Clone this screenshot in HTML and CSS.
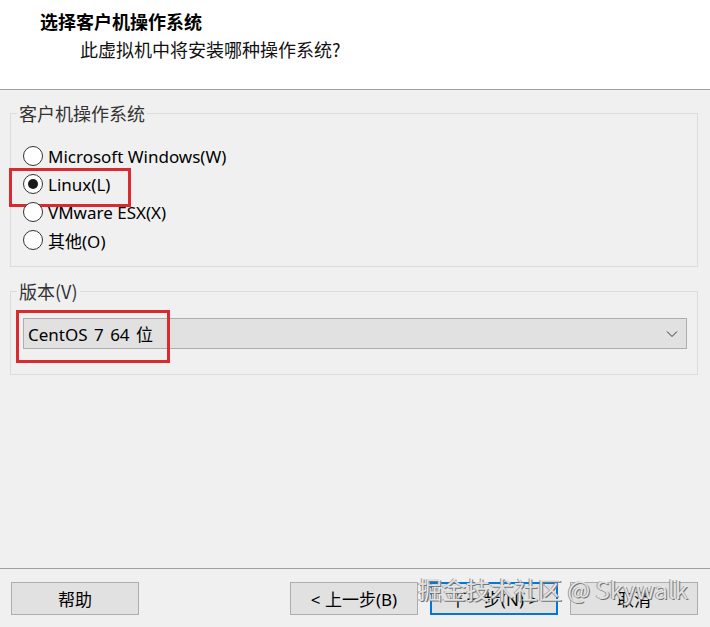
FILE: index.html
```html
<!DOCTYPE html>
<html lang="zh-CN">
<head>
<meta charset="utf-8">
<link rel="stylesheet" href="styles.css">
</head>
<body>
<div class="dialog">
  <header class="head">
    <div class="title">选择客户机操作系统</div>
    <div class="subtitle">此虚拟机中将安装哪种操作系统?</div>
  </header>
  <main class="content">
    <fieldset class="group group-os">
      <legend>客户机操作系统</legend>
      <div class="radios">
        <label class="radio"><span class="dot"></span><span>Microsoft Windows(W)</span></label>
        <label class="radio checked mark mark-linux"><span class="dot"></span><span>Linux(L)</span></label>
        <label class="radio"><span class="dot"></span><span>VMware ESX(X)</span></label>
        <label class="radio"><span class="dot"></span><span><span class="cjk">其他</span>(O)</span></label>
      </div>
    </fieldset>
    <fieldset class="group group-ver">
      <legend><span class="cjk">版本</span>(V)</legend>
      <div class="select mark mark-ver">
        <span class="select-text">CentOS 7 64 <span class="cjk">位</span></span>
        <svg class="chev" width="12" height="8" viewBox="0 0 12 8"><path d="M1 1.5 L6 6.5 L11 1.5" fill="none" stroke="#333" stroke-width="1"/></svg>
      </div>
    </fieldset>
  </main>
  <footer class="foot">
    <button class="btn">帮助</button>
    <div class="spacer"></div>
    <button class="btn">&lt; 上一步(B)</button>
    <button class="btn primary">下一步(N) &gt;</button>
    <button class="btn">取消</button>
    <div class="watermark">掘金技术社区 @ Skywalk</div>
  </footer>
</div>
</body>
</html>
```
FILE: styles.css
```css
* { box-sizing: border-box; }
html, body { margin: 0; padding: 0; }
body {
  width: 710px;
  height: 627px;
  background: #f0f0f0;
  font-family: "Noto Sans", "Noto Sans CJK SC", sans-serif;
  color: #000;
  overflow: hidden;
}
.cjk { font-family: "Noto Sans CJK SC", sans-serif; }
.dialog { display: flex; flex-direction: column; height: 627px; }
.head {
  height: 90px;
  background: #fff;
  border-bottom: 1px solid #a0a0a0;
  padding: 8px 0 0 40px;
}
.title {
  font-family: "Noto Sans CJK SC", sans-serif;
  font-weight: bold;
  font-size: 18px;
  line-height: 26px;
  color: #000;
}
.subtitle {
  font-family: "Noto Sans CJK SC", sans-serif;
  font-size: 18px;
  line-height: 26px;
  padding-left: 40px;
  margin-top: 2px;
  color: #111;
}
.content {
  flex: 1;
  padding: 12px 12px 0 10px;
  border-bottom: 1px solid #a0a0a0;
  display: flex;
  flex-direction: column;
}
.group {
  margin: 0;
  border: 1px solid #dcdcdc;
  padding: 0;
}
.group legend {
  margin-left: 6px;
  padding: 0 2px;
  font-family: "Noto Sans CJK SC", sans-serif;
  font-size: 18px;
  line-height: 22px;
  color: #333;
}
.group-os { height: 165px; }
.radios { display: flex; flex-direction: column; padding: 18px 0 0 12px; }
.radio {
  display: flex;
  align-items: center;
  gap: 5px;
  height: 28px;
  font-size: 17px;
}
.dot {
  width: 20px;
  height: 20px;
  border-radius: 50%;
  border: 1px solid #333;
  background: #fff;
  position: relative;
}
.checked .dot::after {
  content: "";
  position: absolute;
  left: 4px; top: 4px;
  width: 10px; height: 10px;
  border-radius: 50%;
  background: #1a1a1a;
}
.mark { position: relative; }
.mark::after {
  content: "";
  position: absolute;
  border: 3px solid #d92a30;
  pointer-events: none;
}
.mark-linux::after { left: -14px; top: -2px; width: 116px; height: 33px; }
.group-ver { margin-top: 13px; height: 95px; }
.select {
  margin: 16px 10px 0 12px;
  height: 31px;
  background: #e1e1e1;
  border: 1px solid #adadad;
  display: flex;
  align-items: center;
  justify-content: space-between;
  padding: 0 8px 0 4px;
  font-size: 17px;
  word-spacing: 2px;
}
.mark-ver::after { left: -8px; top: -9px; width: 148px; height: 47px; }
.chev { margin-right: 0; }
.foot {
  height: 58px;
  display: flex;
  align-items: flex-start;
  padding: 13px 12px 0 11px;
  gap: 12px;
  position: relative;
}
.spacer { flex: 1; }
.btn {
  width: 128px;
  height: 33px;
  background: #e1e1e1;
  border: 1px solid #adadad;
  font-family: "Noto Sans", "Noto Sans CJK SC", sans-serif;
  font-size: 17px;
  color: #000;
  padding: 0;
}
.btn.primary { border: 2px solid #0078d7; }
.watermark {
  position: absolute;
  left: 418px;
  top: 5px;
  font-family: "Noto Sans CJK SC", sans-serif;
  font-size: 24px;
  line-height: 30px;
  color: rgba(255,255,255,0.75);
  text-shadow: 1px 1px 0 #777, -1px 0 0 #999;
  white-space: nowrap;
}
```
